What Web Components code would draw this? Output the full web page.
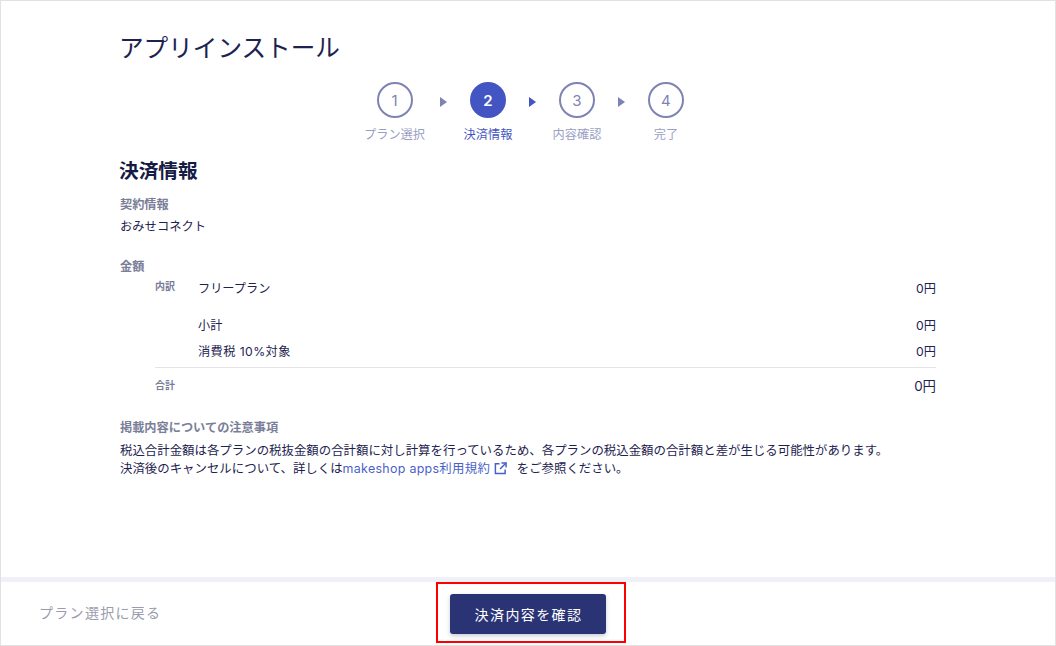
<!DOCTYPE html>
<html lang="ja">
<head>
<meta charset="utf-8">
<title>アプリインストール</title>
<style>
  html, body { margin: 0; height: 100%; background: #fff; }
  body { font-family: "Inter", "Noto Sans CJK JP", sans-serif; color: #1d2350; overflow: hidden; }
</style>
</head>
<body>
<install-page>
  <step-bar slot="steps"></step-bar>
  <pay-info slot="main"></pay-info>
  <foot-bar slot="foot"></foot-bar>
</install-page>

<script>
//page frame: title, stepper, content, footer
var template_page = document.createElement("template");
template_page.innerHTML = `
<style>
  :host { display: flex; flex-direction: column; height: 646px; box-sizing: border-box; border: 1px solid #e2e2e2; }
  #body { flex: 1; padding: 0 119px; display: flex; flex-direction: column; }
  h1 { margin: 30px 0 0 -1px; font-size: 24.6px; line-height: 34px; font-weight: 400; color: #1d2350; }
</style>
<div id="body">
  <h1>アプリインストール</h1>
  <slot name="steps"></slot>
  <slot name="main"></slot>
</div>
<slot name="foot"></slot>
`;
class InstallPage extends HTMLElement {
  constructor(){
    super();
    this.attachShadow({mode:"open"}).appendChild(template_page.content.cloneNode(true));
  }
}

//stepper
var template_steps = document.createElement("template");
template_steps.innerHTML = `
<style>
  :host { display: flex; justify-content: center; margin: 17px 0 0 -1px; }
  .step { display: flex; flex-direction: column; align-items: center; min-width: 50px; }
  .dot { width: 36px; height: 36px; box-sizing: border-box; border: 2px solid #7d84b4; border-radius: 50%; display: flex; align-items: center; justify-content: center; font-size: 15px; font-weight: 400; color: #7d84b4; }
  .label { margin-top: 8px; font-size: 12.2px; line-height: 18px; color: #9a9fc6; white-space: nowrap; }
  .arrow { width: 39px; height: 36px; display: flex; align-items: center; justify-content: center; padding-top: 3px; box-sizing: border-box; }
  .arrow.first { width: 38px; }
  .arrow i { border-left: 7px solid #7d84b4; border-top: 5.5px solid transparent; border-bottom: 5.5px solid transparent; }
  .on .dot { background: #4355c2; border-color: #4355c2; color: #fff; font-weight: 600; }
  .on .label { color: #4355c2; }
  .arrow.on i { border-left-color: #4355c2; }
</style>
<div class="step"><div class="dot">1</div><div class="label">プラン選択</div></div>
<div class="arrow first"><i></i></div>
<div class="step on"><div class="dot">2</div><div class="label">決済情報</div></div>
<div class="arrow on"><i></i></div>
<div class="step"><div class="dot">3</div><div class="label">内容確認</div></div>
<div class="arrow"><i></i></div>
<div class="step"><div class="dot">4</div><div class="label">完了</div></div>
`;
class StepBar extends HTMLElement {
  constructor(){
    super();
    this.attachShadow({mode:"open"}).appendChild(template_steps.content.cloneNode(true));
  }
}

//payment details
var template_info = document.createElement("template");
template_info.innerHTML = `
<style>
  :host { display: block; color: #1d2350; font-size: 12.2px; line-height: 18px; }
  h2 { margin: 13px 0 0 -1px; font-size: 19.7px; line-height: 28px; font-weight: 700; color: #161b45; }
  .head { color: #7a7e98; font-weight: 600; font-size: 12.2px; line-height: 18px; }
  .first { margin-top: 11px; }
  .val { margin-top: 4px; font-size: 12.3px; }
  .money { margin-top: 22px; }
  .table { margin: 2px 0 0 35px; display: grid; grid-template-columns: 43px 1fr auto; }
  .table > div:nth-child(3n) { justify-self: end; }
  .tag { font-size: 10px; color: #7a7e98; font-weight: 600; line-height: 18px; margin-top: -1px; }
  .top { padding-top: 2px; }
  .gap1 { margin-top: 19px; }
  .gap2 { margin-top: 8px; }
  .wide { letter-spacing: 0.42px; }
  hr { grid-column: 1 / -1; width: 100%; margin: 6px 0 9px; border: 0; border-top: 1px solid #e4e4e8; }
  .total { font-size: 13.4px; }
  .notes { margin-top: 24px; }
  .notes p { margin: 5px 0 0; line-height: 18px; font-size: 12.43px; }
  .notes p + p { margin-top: 0; }
  a { color: #4a5fc9; text-decoration: none; letter-spacing: 0.3px; }
  svg { width: 13px; height: 13px; vertical-align: -2px; margin: 0 6px 0 4px; }
</style>
<h2>決済情報</h2>
<div class="head first">契約情報</div>
<div class="val">おみせコネクト</div>
<div class="head money">金額</div>
<div class="table">
  <div class="tag">内訳</div><div class="top">フリープラン</div><div class="top">0円</div>
  <div class="gap1"></div><div class="gap1">小計</div><div class="gap1">0円</div>
  <div class="gap2"></div><div class="gap2 wide">消費税 10%対象</div><div class="gap2">0円</div>
  <hr>
  <div class="tag">合計</div><div></div><div class="total">0円</div>
</div>
<div class="notes">
  <div class="head">掲載内容についての注意事項</div>
  <p>税込合計金額は各プランの税抜金額の合計額に対し計算を行っているため、各プランの税込金額の合計額と差が生じる可能性があります。</p>
  <p>決済後のキャンセルについて、詳しくは<a href="#">makeshop apps利用規約<svg viewBox="0 0 14 14" fill="none" stroke="#4a5fc9" stroke-width="1.6"><path d="M6 2H1.5v10.5H12V8"/><path d="M8 1h5v5"/><path d="M13 1L6.5 7.5"/></svg></a> をご参照ください。</p>
</div>
`;
class PayInfo extends HTMLElement {
  constructor(){
    super();
    this.attachShadow({mode:"open"}).appendChild(template_info.content.cloneNode(true));
  }
}

//footer
var template_foot = document.createElement("template");
template_foot.innerHTML = `
<style>
  :host { display: grid; grid-template-columns: 1fr auto 1fr; align-items: center; height: 68px; box-sizing: border-box; border-top: 5px solid #f0f0f8; }
  .back { padding: 0 0 3px 38px; font-size: 14px; letter-spacing: 1.3px; color: #9a9cae; }
  .mark { align-self: start; border: 2px solid #f00; padding: 10px 18px 7px 12px; margin: 0 1px 0 6px; }
  button { display: block; width: 156px; height: 40px; padding: 0 0 0 2px; border: 0; border-radius: 3px; background: #2a3475; color: #fff; font: 14px "Inter", "Noto Sans CJK JP", sans-serif; letter-spacing: 1.4px; box-shadow: 0 2px 4px rgba(42,52,117,.25); }
</style>
<div class="back">プラン選択に戻る</div>
<div class="mark"><button>決済内容を確認</button></div>
`;
class FootBar extends HTMLElement {
  constructor(){
    super();
    this.attachShadow({mode:"open"}).appendChild(template_foot.content.cloneNode(true));
  }
}

customElements.define("install-page", InstallPage);
customElements.define("step-bar", StepBar);
customElements.define("pay-info", PayInfo);
customElements.define("foot-bar", FootBar);
</script>
</body>
</html>
